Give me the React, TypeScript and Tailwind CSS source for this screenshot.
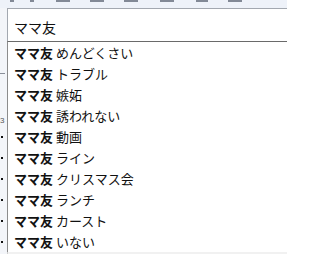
import React from "react";

const items = [
  "めんどくさい",
  "トラブル",
  "嫉妬",
  "誘われない",
  "動画",
  "ライン",
  "クリスマス会",
  "ランチ",
  "カースト",
  "いない",
];

const topMarks = [
  { w: "w-[4px]", ml: "ml-[10px]" },
  { w: "w-[4px]", ml: "ml-[16px]" },
  { w: "w-[14px]", ml: "ml-[22px]" },
  { w: "w-[14px]", ml: "ml-[20px]" },
  { w: "w-[14px]", ml: "ml-[20px]" },
  { w: "w-[14px]", ml: "ml-[22px]" },
  { w: "w-[12px]", ml: "ml-[22px]" },
  { w: "w-[14px]", ml: "ml-[20px]" },
];

function MarginMark({ i }: { i: number }) {
  if (i === 1) {
    return (
      <div className="h-[21px] flex items-center">
        <div className="w-[5px] h-px bg-[#8a8f99]" />
      </div>
    );
  }
  if (i === 3) {
    return (
      <div className="h-[21px] flex items-end">
        <span
          className="text-[8px] leading-none text-[#555] mb-[1px]"
          style={{ fontFamily: '"Liberation Sans", sans-serif' }}
        >
          3
        </span>
      </div>
    );
  }
  if (i >= 4) {
    return (
      <div className="h-[21px] flex items-center">
        <div className="w-[2px] h-[2px] bg-[#111] ml-[1px]" />
      </div>
    );
  }
  return <div className="h-[21px]" />;
}

export default function App() {
  return (
    <div
      className="w-[287px] h-[254px] overflow-hidden bg-[#f3f5f9] flex flex-col"
      style={{ fontFamily: '"Noto Sans CJK JP", "Noto Sans", sans-serif' }}
    >
      <div className="h-[8px] flex items-start shrink-0 bg-[#eef2f9]">
        {topMarks.map((m, i) => (
          <div key={i} className={`${m.w} ${m.ml} h-[2px] bg-[#3a4254] opacity-60`} />
        ))}
      </div>
      <div className="flex flex-1 min-h-0">
        <div className="w-[7px] shrink-0 flex flex-col">
          <div className="h-[34px]" />
          {items.map((_, i) => (
            <MarginMark key={i} i={i} />
          ))}
        </div>
        <div className="flex-1 flex flex-col min-w-0">
          <div className="h-[33px] shrink-0 bg-white border-t border-l border-[#a3a8b0] flex items-center pl-[6px] pt-[3px] text-[14px] text-[#111] leading-none">
            ママ友
          </div>
          <div className="bg-white border-t border-t-[#6a6a6a] border-l border-l-[#8c8c8c] flex flex-col shrink-0">
            {items.map((t) => (
              <div
                key={t}
                className="h-[21px] flex items-center pl-[6px] text-[13px] leading-none text-[#111] whitespace-nowrap"
              >
                <span className="font-bold">ママ友</span>
                <span className="ml-[3px]">{t}</span>
              </div>
            ))}
          </div>
          <div className="flex-1 bg-[#f1f1f1] border-l border-[#cfcfcf]" />
        </div>
      </div>
    </div>
  );
}
